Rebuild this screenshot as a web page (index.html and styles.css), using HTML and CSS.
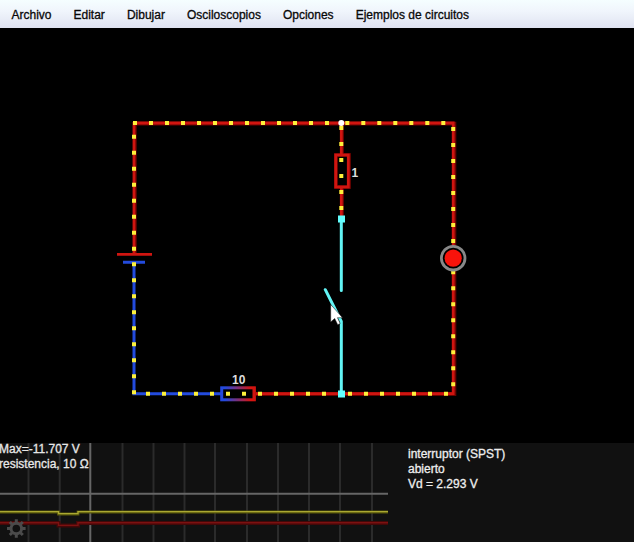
FILE: index.html
```html
<!DOCTYPE html>
<html lang="es">
<head>
<meta charset="utf-8">
<title>Simulador de circuitos</title>
<link rel="stylesheet" href="styles.css">
</head>
<body>
<nav class="menu">
  <span>Archivo</span><span>Editar</span><span>Dibujar</span><span>Osciloscopios</span><span>Opciones</span><span>Ejemplos de circuitos</span>
</nav>
<main class="board">
<svg width="634" height="415" viewBox="0 28 634 415">
  <defs>
    <linearGradient id="drop" x1="0" x2="1"><stop offset=".1" stop-color="#2449dd"/><stop offset=".9" stop-color="#d81410"/></linearGradient>
  </defs>
  <g class="shade">
    <path d="M133 123.6H454.4V246M454.4 271V394H256M134.8 122V254M342 124V154M342 187V218"/>
    <rect x="336" y="155" width="13" height="32"/>
  </g>
  <g class="red">
    <path d="M133 123H453.2V246M453.2 271V393.7H256M134 122V254M341.3 123V154M341.3 187V218"/>
    <path d="M117 254.3H152"/>
    <rect x="335.7" y="155" width="12.6" height="32"/>
  </g>
  <path class="blue" d="M134 262.3V393.7H221M123 262.3H145"/>
  <rect class="fade" x="221.7" y="387.8" width="32.6" height="12"/>
  <path class="red" d="M254 387V400.5"/>
  <g class="dots">
    <path d="M133 123H329M345.3 123H447"/>
    <path d="M134 134.7V252M134 262.3V395"/>
    <path d="M146 393.7H327M348 393.7H449"/>
    <path d="M341.3 126V212"/>
    <path d="M453.2 127V244M453.2 270.3V387"/>
  </g>
  <circle cx="453.2" cy="258.2" r="11.8" class="lamp"/>
  <circle cx="453.2" cy="258.2" r="8.6" class="bulb"/>
  <circle cx="341.3" cy="123" r="3" fill="#fff"/>
  <path class="switch" d="M341.3 218V290.5M325.3 289.7L341.3 321.5V394"/>
  <path class="post" d="M338 215.5h7v7h-7zM338 390.5h7v7h-7z"/>
  <path class="cursor" d="M330.7 304.5V322L334.7 318.5L337.7 324.7L340.2 323.5L337.5 317.7H342.5Z"/>
  <text class="value" x="351.5" y="176.5">1</text>
  <text class="value" x="232" y="384">10</text>
</svg>
</main>
<footer class="panel">
<svg class="scope" width="400" height="99" viewBox="0 443 400 99">
  <path class="grid" d="M28.5 443V542M59.7 443V542M122.5 443V542M153.5 443V542M184.5 443V542M215 443V542M247 443V542M278 443V542M309 443V542M340 443V542M372 443V542"/>
  <path class="axis" d="M90.3 443V542M0 493.8H388"/>
  <path class="redglow" d="M0 523H58.5V525.6H78V523H388"/>
  <path class="redtrace" d="M0 522.8H58.5V525.4H78V522.8H388"/>
  <path class="yellowglow" d="M0 512H58.5V514H78V512H388"/>
  <path class="yellowtrace" d="M0 511.6H58.5V513.6H78V511.6H388"/>
  <g transform="translate(16.3 528.5)" class="gear">
    <circle r="5.3"/>
    <path d="M0-6V-9.3M0 6V9.3M-6 0H-9.3M6 0H9.3M-4.2-4.2L-6.5-6.5M4.2 4.2L6.5 6.5M-4.2 4.2L-6.5 6.5M4.2-4.2L6.5-6.5"/>
  </g>
  <text x="-1" y="453">Max=-11.707 V</text>
  <text x="-1" y="468">resistencia, 10 Ω</text>
</svg>
<div class="info"><div>interruptor (SPST)</div><div>abierto</div><div>Vd = 2.293 V</div></div>
</footer>
</body>
</html>
```
FILE: styles.css
```css
body { margin: 0; width: 634px; height: 542px; overflow: hidden; background: #000; font: 12px "Liberation Sans", sans-serif; }
svg { display: block; }
.menu { height: 28px; box-sizing: border-box; padding: 2px 0 0 11.5px; display: flex; align-items: center; gap: 22px; color: #080808; background: linear-gradient(#f5feff, #f0f5fc 40%, #e0e3f1); white-space: nowrap; -webkit-text-stroke: .3px #080808; }
.board { height: 415px; background: #000; }
.shade { fill: none; stroke: #6b0300; stroke-width: 3.8; }
.red { fill: none; stroke: #cf1510; stroke-width: 2.8; }
.blue { fill: none; stroke: #234bdd; stroke-width: 3; }
.fade { fill: none; stroke: url(#drop); stroke-width: 3; }
.dots { fill: none; stroke: #fdf13b; stroke-width: 4; stroke-dasharray: 4 12; }
.lamp { fill: #000; stroke: #888; stroke-width: 2.8; }
.bulb { fill: #f8130b; }
.switch { fill: none; stroke: #62f4f5; stroke-width: 3; stroke-linecap: round; stroke-linejoin: round; }
.post { fill: #62ffff; }
.cursor { fill: #fff; stroke: #111; stroke-width: .5; }
text { font: 12px "Liberation Sans", sans-serif; fill: #e8e8e8; stroke: #e8e8e8; stroke-width: .3px; }
.value { font-weight: bold; fill: #ddd; stroke: none; }
.panel { display: flex; height: 99px; background: #111; }
.grid { fill: none; stroke: #2b2b2b; stroke-width: 2; }
.axis { fill: none; stroke: #666; stroke-width: 2; }
.redglow { fill: none; stroke: #430808; stroke-width: 4; }
.redtrace { fill: none; stroke: #7c1111; stroke-width: 1.4; }
.yellowglow { fill: none; stroke: #59580b; stroke-width: 2.8; }
.yellowtrace { fill: none; stroke: #aaa832; stroke-width: 1.3; }
.gear { fill: none; stroke: #4b4b4b; stroke-width: 3; }
.info { padding: 4px 0 0 8px; line-height: 15px; color: #eee; -webkit-text-stroke: .3px #eee; white-space: nowrap; }
```
